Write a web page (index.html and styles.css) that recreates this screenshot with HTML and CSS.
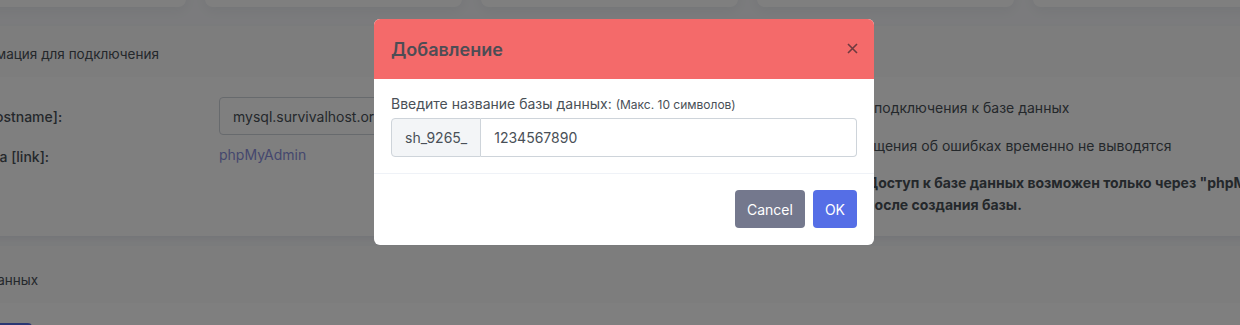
FILE: index.html
```html
<!DOCTYPE html>
<html lang="ru">
<head>
    <meta charset="UTF-8">
    <meta name="viewport" content="width=device-width, initial-scale=1.0">
    <title>Базы данных MySQL</title>
    <link rel="stylesheet" href="styles.css">
</head>
<body>
    <div class="page">
        <div class="stats">
            <div class="stat-card"></div>
            <div class="stat-card"></div>
            <div class="stat-card"></div>
            <div class="stat-card"></div>
            <div class="stat-card"></div>
        </div>

        <div class="card">
            <div class="card-header">Информация для подключения</div>
            <div class="card-body info-body">
                <div class="info-table">
                    <div class="info-label">Хост [hostname]:</div>
                    <div class="info-value">
                        <input type="text" class="form-control" value="mysql.survivalhost.org" readonly>
                    </div>
                    <div class="info-label info-label-top">Админка [link]:</div>
                    <div class="info-value"><a href="#" class="info-link">phpMyAdmin</a></div>
                </div>
                <div class="info-notes">
                    <p>Хост подключения к базе данных</p>
                    <p>Сообщения об ошибках временно не выводятся</p>
                    <div class="note-warning">
                        <span class="note-icon">!</span>
                        <p>Доступ к базе данных возможен только через "phpMyAdmin" после создания базы.</p>
                    </div>
                </div>
            </div>
        </div>

        <div class="card">
            <div class="card-header">Базы данных</div>
            <div class="card-body">
                <button class="btn btn-primary">Добавить</button>
            </div>
        </div>
    </div>

    <div class="modal-backdrop"></div>
    <div class="modal">
        <div class="modal-content">
            <div class="modal-header">
                <h5 class="modal-title">Добавление</h5>
                <button class="btn-close" type="button">
                    <svg width="11" height="11" viewBox="0 0 11 11"><path d="M1 1L10 10M10 1L1 10" stroke="currentColor" stroke-width="1.6" fill="none"/></svg>
                </button>
            </div>
            <div class="modal-body">
                <label class="form-label">Введите название базы данных: <small>(Макс. 10 символов)</small></label>
                <div class="input-group">
                    <span class="input-group-text">sh_9265_</span>
                    <input type="text" class="form-control" value="1234567890">
                </div>
            </div>
            <div class="modal-footer">
                <button class="btn btn-secondary">Cancel</button>
                <button class="btn btn-primary">OK</button>
            </div>
        </div>
    </div>
</body>
</html>
```

FILE: styles.css
```css
* {
    margin: 0;
    padding: 0;
    box-sizing: border-box;
}

body {
    font-family: 'Inter', 'Noto Sans', sans-serif;
    font-size: 14px;
    color: #495057;
    background: #f6f7fa;
    overflow: hidden;
    height: 325px;
}

.page {
    width: 1420px;
    margin-left: -71px;
}

.stats {
    display: grid;
    grid-template-columns: repeat(5, 257px);
    gap: 19px;
    margin-top: -60px;
}

.stat-card {
    height: 67px;
    background: #fff;
    border-radius: 8px;
    box-shadow: 0 4px 12px rgba(18, 38, 63, 0.05);
}

.card {
    background: #fff;
    margin-top: 19px;
    box-shadow: 0 3px 6px rgba(18, 38, 63, 0.06);
}

.card + .card {
    margin-top: 10px;
}

.card-header {
    background: #fafafb;
    padding: 19px 23px 14px;
    line-height: 18px;
    font-size: 13.5px;
}

.card + .card .card-header {
    padding: 25px 23px 14px;
}

.card-body {
    padding: 20px;
}

.info-body {
    display: flex;
    padding-left: 16px;
}

.info-table {
    display: grid;
    grid-template-columns: 274px 420px;
    row-gap: 10px;
    align-content: start;
    flex-shrink: 0;
}

.info-label {
    font-weight: 500;
    display: flex;
    align-items: center;
}

.info-label-top {
    align-items: flex-start;
    padding-top: 3px;
}

.form-control {
    font-family: inherit;
    font-size: 14px;
    color: #495057;
    height: 38px;
    padding: 0 13px;
    border: 1px solid #ced4da;
    border-radius: 4px;
    background: #fff;
    width: 100%;
    outline: none;
}

.info-link {
    color: #8a8fdc;
    text-decoration: none;
    line-height: 20px;
}

.info-notes {
    margin-left: 199px;
    flex: 1;
    line-height: 22px;
}

.info-notes p {
    margin-bottom: 16px;
}

.info-notes .note-warning p {
    margin: 0;
}

.note-warning {
    display: flex;
    gap: 8px;
    font-weight: 700;
    margin-top: -1px;
}

.note-icon {
    width: 20px;
    flex-shrink: 0;
    text-align: center;
}

.btn {
    font-family: inherit;
    font-size: 14px;
    border: none;
    border-radius: 4px;
    color: #fff;
    height: 38px;
    padding: 0 12px;
    cursor: pointer;
}

.btn-primary {
    background: #556ee6;
}

.btn-secondary {
    background: #74788d;
}

.card-body .btn {
    width: 83px;
}

.modal-backdrop {
    position: fixed;
    inset: 0;
    background: rgba(0, 0, 0, 0.5);
}

.modal {
    position: fixed;
    inset: 0;
    display: flex;
    justify-content: center;
    align-items: flex-start;
    padding: 19px 0 0 8px;
}

.modal-content {
    width: 500px;
    background: #fff;
    border-radius: 6px;
    overflow: hidden;
}

.modal-header {
    background: #f46a6a;
    height: 60px;
    padding: 0 16px 0 17px;
    display: flex;
    align-items: center;
    justify-content: space-between;
}

.modal-title {
    font-size: 18px;
    font-weight: 600;
    color: #4d4d55;
}

.btn-close {
    background: none;
    border: none;
    color: #6e3a3f;
    display: flex;
    margin-top: -2px;
    cursor: pointer;
}

.modal-body {
    padding: 16px 17px 16px;
}

.form-label {
    display: block;
    line-height: 17px;
    margin-bottom: 5px;
}

.form-label small {
    font-size: 12px;
}

.input-group {
    display: flex;
}

.input-group-text {
    display: flex;
    align-items: center;
    padding: 0 13px;
    background: #f3f5f7;
    border: 1px solid #ced4da;
    border-radius: 4px 0 0 4px;
    height: 39px;
}

.input-group .form-control {
    height: 39px;
    border-left: none;
    border-radius: 0 4px 4px 0;
    flex: 1;
}

.modal-footer {
    border-top: 1px solid #eff2f7;
    padding: 16px 17px 17px;
    display: flex;
    justify-content: flex-end;
    gap: 8px;
}
```
